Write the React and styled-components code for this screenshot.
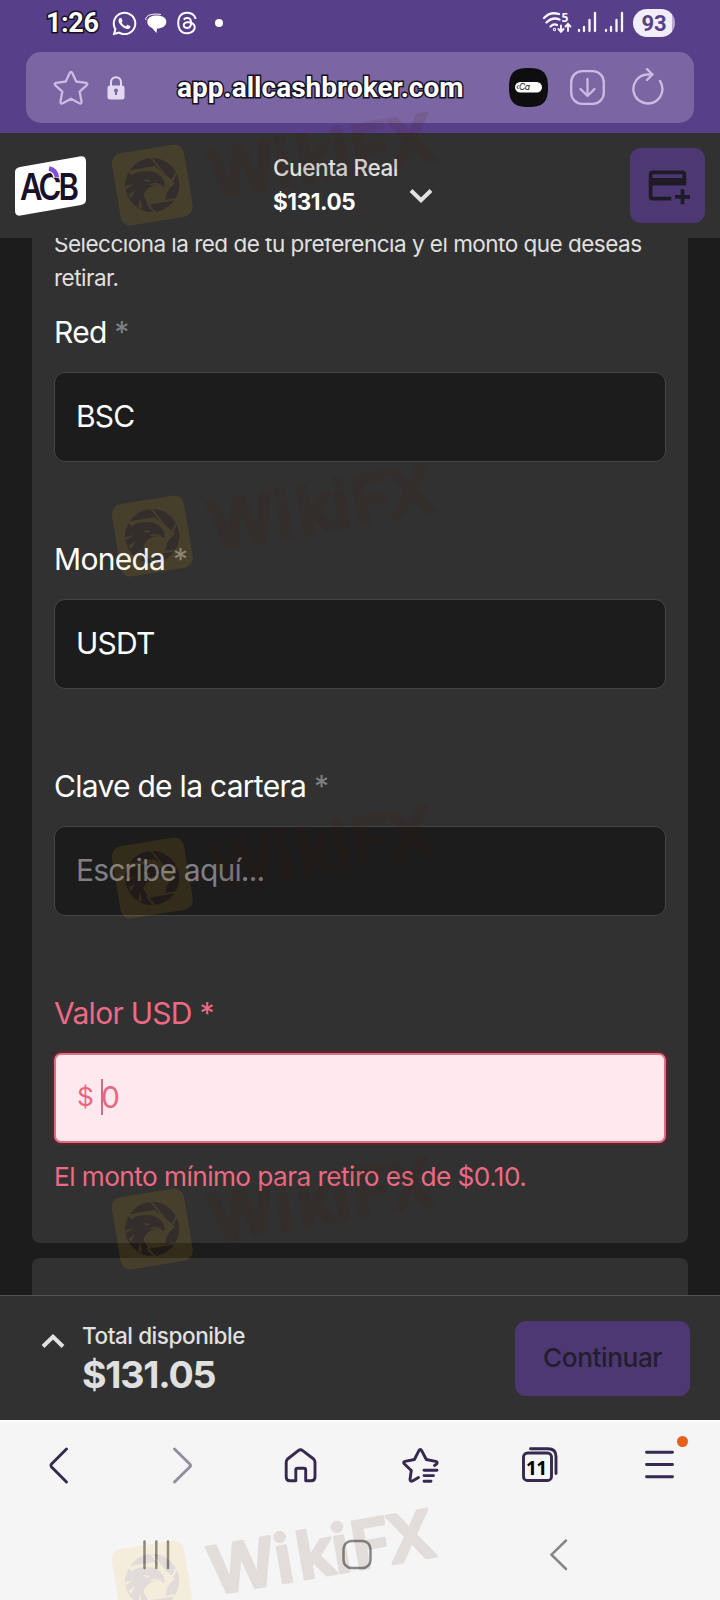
import styled, { createGlobalStyle } from "styled-components";
import { FaWhatsapp, FaThreads } from "react-icons/fa6";
import { MdAddCard } from "react-icons/md";

const fields = [
    { label: "Red", value: "BSC" },
    { label: "Moneda", value: "USDT" },
    { label: "Clave de la cartera", placeholder: "Escribe aquí..." },
];

const marks = [184.5, 536, 877.5, 1229, 1581];

const Watermark = ({ y }) => (
    <Mark $y={y} viewBox="0 0 340 130">
        <g opacity="0.105" transform="translate(52.3 80)">
            <rect x="-36.5" y="-36.5" width="73" height="73" rx="10" fill="#f5b40c" transform="rotate(-9.5)" />
            <circle r="27" fill="#461400" />
            <path d="M-24 -14 L3 -18 L20 -5 L15 5 L13 15 L-4 19 Z" fill="#f5b40c" />
            <path d="M-24 -13.5 L3 -18 M-1 -27 L19 -2 M25 -14 L14 7 M14 5 L22 -3 M-5 19 L24 14 M-5 19 L3 28" fill="none" stroke="#f5b40c" strokeWidth="1.9" />
            <path d="M-27.3 -3 C-20 -14 -8 -15.5 2 -13 C9 -10 12.5 -5 12.5 2 C8 -1 2 -.5 -2 2 C-11 7 -12 18 -1 27 C-15 27 -27.5 12 -27.3 -3 Z" fill="#461400" />
            <path d="M-9 -6 L-2 -5 L-4 -3 L-7 -4 Z M-3 0 C1 -3 6 -2 9 0 L3 -.3 Z M-27 1 L-18 -1 L-26 4 Z M-24 10 L-17 5 L-21 13 Z M-14 22 L-12 13 L-10 24 Z" fill="#f5b40c" />
        </g>
        <MarkText x="0 67 89 125 145 181" transform="translate(113 94) rotate(-9.9)">WikiFX</MarkText>
    </Mark>
);

const Chevron = ({ up }) => (
    <svg width="24" height="14" viewBox="0 0 24 14" fill="none" stroke="#e2e2e2" strokeWidth="4">
        <path d={up ? "M2 12.5 L12 2.8 L22 12.5" : "M2 1.5 L12 11.2 L22 1.5"} />
    </svg>
);

const App = () => {
    return (
        <Screen>
            <GlobalStyle />
            <StatusBar>
                <Clock>1:26</Clock>
                <FaWhatsapp size={27} />
                <svg width="22" height="20" viewBox="0 0 22 20" fill="#fff">
                    <path d="M11 2.6 C18 2.6 21.3 5 21.3 9 C21.3 13 17 15.5 12 15.5 L11.5 20 L7 15 C4 13.5 2.3 11.5 2.3 9 C2.3 5 6 2.6 11 2.6 Z" />
                    <path d="M.9 7 C0 2.5 7 0 16 1.5" fill="none" stroke="#fff" />
                </svg>
                <FaThreads size={24} />
                <Notice />
                <Signals>
                    <svg width="86" height="24" viewBox="0 0 86 24" fill="none" stroke="#f7f4fc" strokeWidth="2.3" strokeLinecap="round">
                        <path d="M2 7 C7 1.5 12 1.5 17 3 M4.5 11.5 C9 7 13 6.5 17.5 8.5 M8.5 15.5 C11 13 13 13 15 14" />
                        <circle cx="12.5" cy="18.5" r=".5" />
                        <path d="M19 14.5 V20 M16.5 18 L19 20.8 L21.5 18 M26 20 V13.5 M23.5 15.5 L26 12.8 L28.5 15.5" strokeWidth="1.9" />
                        <path d="M37 19 V20 M42 16 V20 M47.5 9 V20 M53 2 V20 M64 19 V20 M69 16 V20 M74.5 9 V20 M80 2 V20" />
                        <text x="19.5" y="10.5" fill="#f7f4fc" stroke="none" fontFamily="Noto Sans, sans-serif" fontWeight="700" fontSize="12">5</text>
                    </svg>
                    <Battery>93</Battery>
                </Signals>
            </StatusBar>

            <AddressArea>
                <AddressBar>
                    <svg width="36" height="36" viewBox="0 0 36 36" fill="none" stroke="#cbbbe3" strokeWidth="2.3" strokeLinejoin="round">
                        <path d="M18 1.8 Q18.8 1.8 19.3 3 L23.2 11.5 L33 12.8 Q35.3 13.4 33.8 15.1 L26.7 21.7 L28.5 31.5 Q28.6 34.3 26.2 33.2 L18 28.7 L9.8 33.2 Q7.3 34.3 7.5 31.5 L9.3 21.7 L2.2 15.1 Q.8 13.4 3 12.8 L12.8 11.5 L16.7 3 Q17.2 1.8 18 1.8 Z" />
                    </svg>
                    <svg width="18" height="24" viewBox="0 0 18 24">
                        <path d="M4 11 V6.5 C4 -.5 14 -.5 14 6.5 V11" fill="none" stroke="#e2d9f1" strokeWidth="2" />
                        <rect x=".5" y="9.5" width="17" height="14" rx="2.5" fill="#e2d9f1" />
                        <path d="M9 14 V19" stroke="#7b66a3" strokeWidth="2" />
                        <circle cx="9" cy="14.5" r="2" fill="#7b66a3" />
                    </svg>
                    <Url>app.allcashbroker.com</Url>
                    <Tools>
                        <svg width="39" height="39" viewBox="0 0 39 39">
                            <path d="M19.5 0 C34 0 39 5 39 19.5 C39 34 34 39 19.5 39 C5 39 0 34 0 19.5 C0 5 5 0 19.5 0 Z" fill="#0e0e10" />
                            <rect x="6" y="14" width="27" height="10.5" rx="5.2" fill="#fff" />
                            <text x="7" y="22" fontFamily="Inter, sans-serif" fontSize="8.5" fontStyle="italic" fill="#111" textLength="14">‹Ca</text>
                        </svg>
                        <svg width="35" height="35" viewBox="0 0 35 35" fill="none" stroke="#cbbbe3" strokeWidth="2.3" strokeLinecap="round" strokeLinejoin="round">
                            <rect x="1.2" y="1.2" width="32.6" height="32.6" rx="11" />
                            <path d="M17.5 9 V26 M10.5 19 L17.5 26 L24.5 19" />
                        </svg>
                        <svg width="34" height="38" viewBox="0 0 34 38" fill="none" stroke="#cbbbe3" strokeWidth="2.4" strokeLinecap="round" strokeLinejoin="round">
                            <path d="M29 14 A14.5 14.5 0 1 1 16 7.5 L21.5 7.5 M16 2.2 L21.5 7.5 L16 13" />
                        </svg>
                    </Tools>
                </AddressBar>
            </AddressArea>

            <Header>
                <svg width="72" height="62" viewBox="0 0 72 62">
                    <path d="M6 12 L65.5 1.5 Q72 .5 72 6.5 V44.5 Q72 49 67 50 L6.5 60.5 Q1 61.5 1 55.5 V17 Q1 13 6 12 Z" fill="#fff" />
                    <LogoText x="6 24.5 44.5">ACB</LogoText>
                    <path d="M35 13.5 Q43 15.5 42.5 23" fill="none" stroke="#fff" strokeWidth="7" />
                    <path d="M35 13.5 Q42 15 43 22.5" fill="none" stroke="#7f50d8" strokeWidth="4.5" />
                </svg>
                <Account>
                    <div>
                        <AccountName>Cuenta Real</AccountName>
                        <AccountValue>$131.05</AccountValue>
                    </div>
                    <Chevron />
                </Account>
                <CardButton>
                    <MdAddCard size={45} />
                </CardButton>
            </Header>

            <Content>
                <Panel>
                    <Intro>Selecciona la red de tu preferencia y el monto que deseas retirar.</Intro>
                    {fields.map((field) => (
                        <Field key={field.label}>
                            <Label>
                                {field.label} <span>*</span>
                            </Label>
                            <Box $muted={!field.value}>{field.value || field.placeholder}</Box>
                        </Field>
                    ))}
                    <Field>
                        <Label $error>
                            Valor USD <span>*</span>
                        </Label>
                        <Box $error>
                            <Currency>$</Currency>
                            <Caret />0
                        </Box>
                        <ErrorText>El monto mínimo para retiro es de $0.10.</ErrorText>
                    </Field>
                </Panel>
                <NextPanel />
            </Content>

            <Summary>
                <Toggle>
                    <Chevron up />
                </Toggle>
                <div>
                    <TotalLabel>Total disponible</TotalLabel>
                    <Total>$131.05</Total>
                </div>
                <Continue>Continuar</Continue>
            </Summary>

            <Toolbar>
                <ToolIcon viewBox="0 0 40 40">
                    <path d="M26.5 4 L11.3 19.3 Q10.3 20.5 11.3 21.7 L26.5 37" />
                </ToolIcon>
                <ToolIcon viewBox="0 0 40 40" $faded>
                    <path d="M14.5 4 L30 19.3 Q31 20.5 30 21.7 L14.5 37" />
                </ToolIcon>
                <ToolIcon viewBox="0 0 40 40">
                    <path d="M18.3 5.6 Q20.5 3.8 22.7 5.6 L33.6 14 Q35 15.3 35 17.5 V32 Q35 35.8 31 35.8 H25.7 V25 Q25.7 23.2 24 23.2 H17.5 Q15.8 23.2 15.8 25 V35.8 H10 Q6.2 35.8 6.2 32 V17.5 Q6.2 15.3 7.6 14 Z" />
                </ToolIcon>
                <ToolIcon viewBox="0 0 40 40">
                    <path d="M34.5 20.5 L36.8 18.8 Q38 16.8 35.5 16.3 L26.3 14.5 L21.8 5.8 Q20.3 3 18.8 5.8 L14.4 14.5 L5 16.3 Q2.8 17 4.2 18.8 L11.3 25.5 L10 34.5 Q10.2 37 12.5 36 L18.5 32.5 M24 25.2 H37 M24 30.6 H33.5 M24 36.2 H31" />
                </ToolIcon>
                <ToolIcon viewBox="0 0 40 40">
                    <rect x="3.5" y="8" width="28" height="27.5" rx="4" />
                    <path d="M10.5 3.8 H28 Q36 3.8 36 11.5 V28.5" />
                    <text x="6" y="29.5" fill="#000" stroke="none" fontFamily="Noto Sans, sans-serif" fontWeight="700" fontSize="19" textLength="21">11</text>
                </ToolIcon>
                <MenuIcon>
                    <ToolIcon viewBox="0 0 40 40">
                        <path d="M6.5 7.3 H32.5 M6.5 19.5 H32.5 M6.5 31.8 H32.5" />
                    </ToolIcon>
                    <Badge />
                </MenuIcon>
            </Toolbar>

            <SystemNav>
                <NavIcon viewBox="0 0 36 36">
                    <path d="M6.5 4.5 V31 M18.3 4.5 V31 M30 4.5 V31" />
                </NavIcon>
                <NavIcon viewBox="0 0 36 36">
                    <rect x="4.5" y="4" width="27" height="27" rx="8" />
                </NavIcon>
                <NavIcon viewBox="0 0 36 36">
                    <path d="M26 3.5 L11.5 17.7 L26 32" />
                </NavIcon>
            </SystemNav>

            {marks.map((y) => (
                <Watermark key={y} y={y} />
            ))}
        </Screen>
    );
};

const GlobalStyle = createGlobalStyle`
    body {
        margin: 0;
        background: #1c1c1c;
    }

    svg {
        display: block;
        flex-shrink: 0;
    }
`;

const Screen = styled.div`
    position: relative;
    display: flex;
    flex-direction: column;
    width: 720px;
    height: 1600px;
    overflow: hidden;
    background: #1c1c1c;
    color: #fff;
    font-family: Inter, sans-serif;
`;

const StatusBar = styled.div`
    display: flex;
    align-items: center;
    box-sizing: border-box;
    height: 52px;
    padding: 0 45px 6px 46px;
    background: #583f89;

    > svg:nth-of-type(1) {
        margin-left: 12px;
    }

    > svg:nth-of-type(2) {
        margin-left: 7px;
    }

    > svg:nth-of-type(3) {
        margin-left: 8px;
    }
`;

const Clock = styled.span`
    width: 53px;
    font: 700 27px/40px Roboto, sans-serif;
    letter-spacing: -0.4px;
    -webkit-text-stroke: 3px #15101f;
    paint-order: stroke fill;
`;

const Notice = styled.span`
    width: 8px;
    height: 8px;
    margin-left: 16px;
    border-radius: 50%;
    background: #fff;
`;

const Signals = styled.div`
    display: flex;
    align-items: center;
    gap: 5px;
    margin-left: auto;
`;

const Battery = styled.span`
    width: 42px;
    height: 28px;
    border-radius: 14px;
    background: linear-gradient(90deg, #f2edfa 39px, #b9a9d2 39px);
    color: #583f89;
    font: 700 22px/30px Roboto, sans-serif;
    text-align: center;
`;

const AddressArea = styled.div`
    box-sizing: border-box;
    height: 81px;
    padding: 0 26px 10px;
    background: #583f89;
`;

const AddressBar = styled.div`
    display: flex;
    align-items: center;
    box-sizing: border-box;
    height: 71px;
    padding: 0 29px 0 27px;
    border-radius: 15px;
    background: #7b66a3;

    > svg:nth-of-type(2) {
        margin: 0 0 0 18px;
    }
`;

const Url = styled.span`
    margin: 1px 0 0 52px;
    font: 700 28px/40px Roboto, sans-serif;
    letter-spacing: 0.02px;
    -webkit-text-stroke: 3px #15101f;
    paint-order: stroke fill;
    white-space: nowrap;
`;

const Tools = styled.div`
    display: flex;
    align-items: center;
    gap: 25px;
    margin-left: auto;

    > svg:nth-of-type(1) {
        margin-right: -3px;
    }

    > svg:nth-of-type(3) {
        margin: -4px 0 0 1px;
    }
`;

const Header = styled.header`
    display: flex;
    align-items: center;
    box-sizing: border-box;
    height: 105px;
    padding: 0 15px 0 14px;
    background: #313131;
`;

const Account = styled.div`
    display: flex;
    align-items: center;
    gap: 11px;
    margin: -2px auto 0 187px;
    letter-spacing: -0.025em;

    svg {
        margin-top: 23px;
    }
`;

const AccountName = styled.div`
    color: #e0e0e0;
    font-size: 22.5px;
    font-weight: 500;
    line-height: 34px;
`;

const AccountValue = styled.div`
    font-size: 22.5px;
    font-weight: 700;
    line-height: 34px;
`;

const CardButton = styled.div`
    display: flex;
    align-items: center;
    justify-content: center;
    width: 75px;
    height: 75px;
    border-radius: 11px;
    background: #4d3873;
    color: #1f1b26;
`;

const Content = styled.main`
    height: 1057px;
    overflow: hidden;
`;

const Panel = styled.section`
    box-sizing: border-box;
    height: 1021px;
    margin: -16px 32px 15px;
    padding: 5px 22px 0;
    border-radius: 8px;
    background: #313131;
`;

const NextPanel = styled.section`
    height: 120px;
    margin: 0 32px;
    border-radius: 8px;
    background: #313131;
`;

const Intro = styled.p`
    margin: 0 0 19px;
    color: #e0e0e0;
    font-size: 22.5px;
    line-height: 34px;
    letter-spacing: -0.023em;
`;

const Field = styled.div`
    height: 227px;
`;

const Label = styled.div`
    margin-bottom: 22px;
    color: ${(props) => (props.$error ? "#ee6a84" : "#fff")};
    font-size: 30px;
    line-height: 36px;
    letter-spacing: -0.024em;

    span {
        color: ${(props) => (props.$error ? "inherit" : "#808084")};
    }
`;

const Box = styled.div`
    display: flex;
    align-items: center;
    box-sizing: border-box;
    height: 90px;
    padding: 0 21px 3px;
    border: ${(props) => (props.$error ? "2px solid #dc6f85" : "1px solid #444")};
    border-radius: ${(props) => (props.$error ? "7px" : "11px")};
    background: ${(props) => (props.$error ? "#ffe9ee" : "#1c1c1c")};
    box-shadow: ${(props) => (props.$error ? "0 0 2px 2px #5c2630" : "none")};
    color: ${(props) => (props.$error ? "#e8677f" : props.$muted ? "#808084" : "#fff")};
    font-size: 30px;
    letter-spacing: -0.027em;
`;

const Currency = styled.span`
    margin-right: 8px;
    font-size: 26.25px;
`;

const Caret = styled.span`
    width: 2px;
    height: 36px;
    margin-right: -2px;
    background: #c96e8a;
`;

const ErrorText = styled.div`
    margin-top: 18px;
    color: #ee6a84;
    font-size: 26.25px;
    line-height: 32px;
    letter-spacing: -0.022em;
`;

const Summary = styled.div`
    display: flex;
    box-sizing: border-box;
    height: 125px;
    padding: 25px 30px 0 41px;
    border-top: 1px solid #555;
    background: #313131;
    color: #e0e0e0;
    letter-spacing: -0.027em;
`;

const Toggle = styled.div`
    width: 41px;
    padding-top: 13px;
`;

const TotalLabel = styled.div`
    margin-top: 1px;
    font-size: 22.5px;
    font-weight: 500;
    line-height: 28px;
`;

const Total = styled.div`
    font-size: 37.5px;
    font-weight: 700;
    line-height: 50px;
    letter-spacing: -0.032em;
`;

const Continue = styled.div`
    width: 175px;
    height: 75px;
    margin-left: auto;
    border-radius: 11px;
    background: #4d3873;
    color: #231e2b;
    font-size: 26.25px;
    font-weight: 500;
    line-height: 74px;
    text-align: center;
`;

const Toolbar = styled.nav`
    display: grid;
    grid-template-columns: repeat(6, 120px);
    justify-items: center;
    box-sizing: border-box;
    height: 100px;
    padding-top: 23px;
    border-top: 2px solid #fdfdfd;
    background: #f5f5f5;
`;

const ToolIcon = styled.svg`
    width: 40px;
    height: 40px;
    fill: none;
    stroke: #36284f;
    stroke-width: 2.9;
    stroke-linecap: round;
    stroke-linejoin: round;
    opacity: ${(props) => (props.$faded ? 0.5 : 1)};
`;

const MenuIcon = styled.div`
    position: relative;
`;

const Badge = styled.span`
    position: absolute;
    top: -9px;
    right: -8px;
    width: 11px;
    height: 11px;
    border-radius: 50%;
    background: #e8611c;
`;

const SystemNav = styled.nav`
    display: grid;
    grid-template-columns: repeat(3, 201px);
    justify-content: center;
    justify-items: center;
    flex: 1;
    padding: 17px 7px 0 0;
    background: #f5f5f5;
`;

const NavIcon = styled.svg`
    width: 36px;
    height: 36px;
    fill: none;
    stroke: #868686;
    stroke-width: 2.5;
    stroke-linecap: round;
`;

const Mark = styled.svg`
    position: absolute;
    top: ${(props) => props.$y - 80}px;
    left: 100px;
    width: 340px;
    height: 130px;
    overflow: visible;
    pointer-events: none;
`;

const MarkText = styled.text`
    fill: #461400;
    stroke: #461400;
    stroke-width: 3px;
    stroke-linejoin: round;
    opacity: 0.1;
    font-family: Inter, sans-serif;
    font-size: 66px;
    font-weight: 600;
`;

const LogoText = styled.text`
    fill: #191029;
    font-family: Inter, sans-serif;
    font-size: 31px;
    font-weight: 600;
    transform: translateY(44.5px) scaleY(1.17);
`;

export default App;
